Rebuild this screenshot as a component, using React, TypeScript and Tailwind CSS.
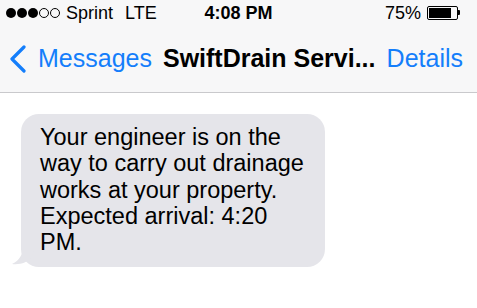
export default function App() {
  return (
    <div className="w-[477px] h-[308px] bg-white overflow-hidden font-['Liberation_Sans',Arial,sans-serif] text-black">
      {/* Status bar + nav */}
      <div className="bg-[#f7f7f8] border-b border-[#c9c9cc]">
        <div className="h-[25px] flex items-center px-[6px] text-[18px] leading-none">
          <div className="flex-1 flex items-center">
            <div className="flex items-center gap-[1px]">
              <span className="w-[10px] h-[10px] rounded-full bg-black" />
              <span className="w-[10px] h-[10px] rounded-full bg-black" />
              <span className="w-[10px] h-[10px] rounded-full bg-black" />
              <span className="w-[10px] h-[10px] rounded-full border border-black" />
              <span className="w-[10px] h-[10px] rounded-full border border-black" />
            </div>
            <span className="ml-[6px]">Sprint</span>
            <span className="ml-[12px]">LTE</span>
          </div>
          <span className="font-bold">4:08 PM</span>
          <div className="flex-1 flex items-center justify-end gap-[6px]">
            <span>75%</span>
            <div className="flex items-center mr-[11px]">
              <div className="w-[31px] h-[14px] border border-black rounded-[2px] p-[1px] flex">
                <div className="w-[22px] h-full bg-black" />
              </div>
              <div className="w-[2px] h-[5px] bg-black rounded-r-[1px]" />
            </div>
          </div>
        </div>
        <div className="h-[67px] flex items-center pl-[9px] pr-[14px] text-[25px] leading-none">
          <svg width="18" height="28" viewBox="0 0 18 28" className="mr-[11px]">
            <path d="M15 2 L3 14 L15 26" fill="none" stroke="#147efb" strokeWidth="3.2" strokeLinecap="round" strokeLinejoin="round" />
          </svg>
          <span className="text-[#147efb]">Messages</span>
          <span className="font-bold ml-[11px] flex-1">SwiftDrain Servi...</span>
          <span className="text-[#147efb]">Details</span>
        </div>
      </div>

      {/* Conversation */}
      <div className="pt-[21px] pl-[21px]">
        <div className="relative w-[304px]">
          <div className="bg-[#e5e5ea] rounded-[18px] pl-[19px] pr-[10px] pt-[10px] pb-[12px] text-[23.5px] leading-[26.3px]">
            Your engineer is on the way to carry out drainage works at your property. Expected arrival: 4:20 PM.
          </div>
          <svg width="24" height="20" viewBox="0 0 24 20" className="absolute left-[-9px] bottom-[1px]">
            <path d="M11 0 C11 8 8 14 0 18 C9 19 15 16 19 12 L24 0 Z" fill="#e5e5ea" />
          </svg>
        </div>
      </div>
    </div>
  );
}
